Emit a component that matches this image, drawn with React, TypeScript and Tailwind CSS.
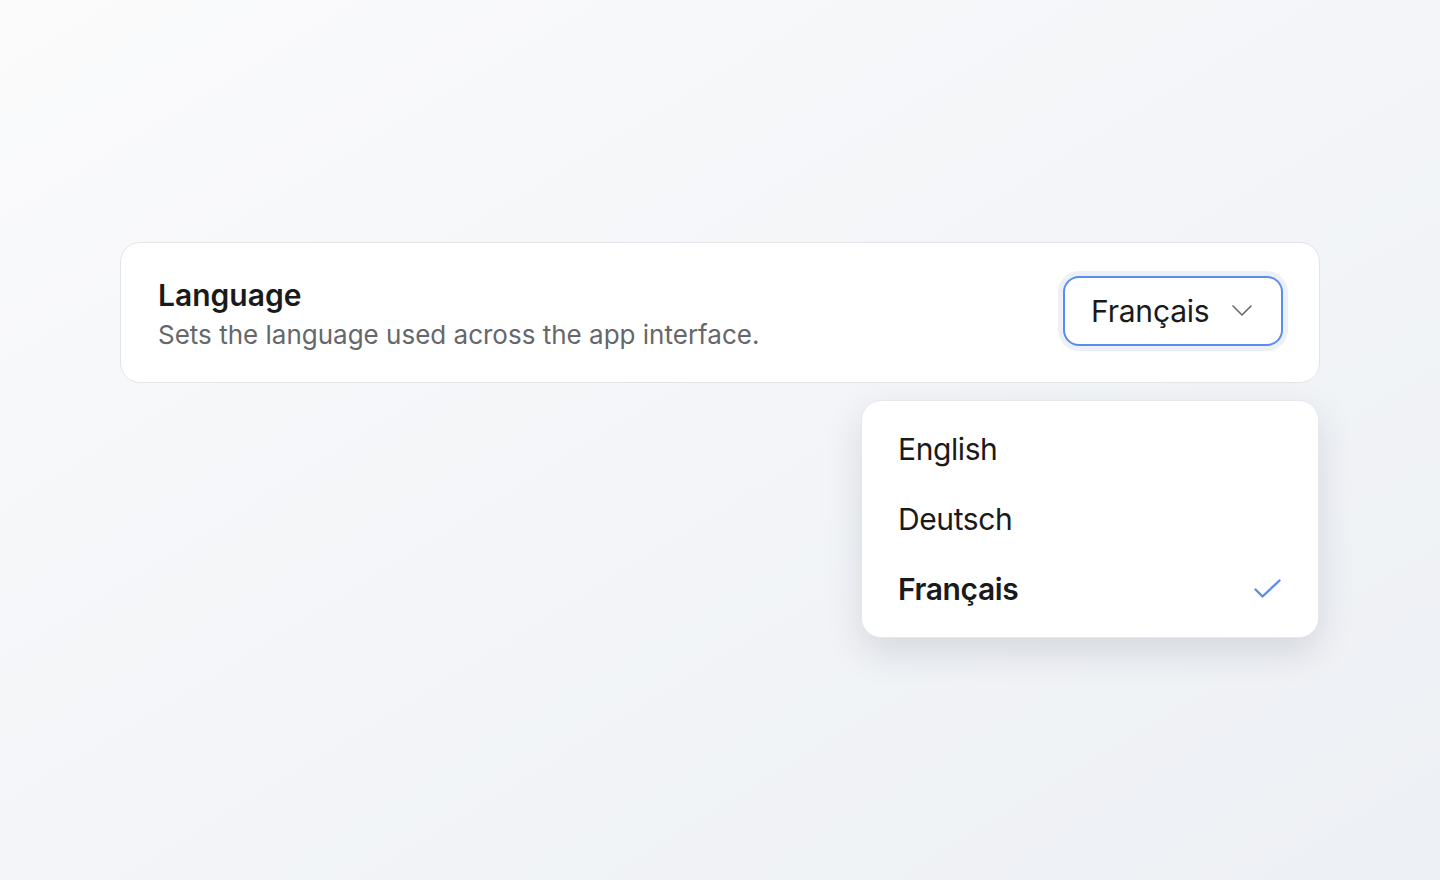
import { useState } from "react";

const idiomas = ["English", "Deutsch", "Français"];

function Chevron() {
  return (
    <svg width="20" height="11" viewBox="0 0 20 11" fill="none" className="shrink-0">
      <path d="M1 1l9 9 9-9" stroke="#666a70" strokeWidth="1.6" strokeLinecap="round" strokeLinejoin="round" />
    </svg>
  );
}

function Check() {
  return (
    <svg width="27" height="20" viewBox="0 0 27 20" fill="none" className="shrink-0">
      <path d="M1.5 10.5l7 7L25.5 1.5" stroke="#5b8def" strokeWidth="2.4" strokeLinecap="round" strokeLinejoin="round" />
    </svg>
  );
}

export default function App() {
  const [valor, setValor] = useState("Français");

  return (
    <div
      className="min-h-screen w-full bg-gradient-to-br from-[#fbfbfc] via-[#f3f5f8] to-[#edf0f4] pt-[242px]"
      style={{ fontFamily: "Inter, 'Noto Sans', sans-serif" }}
    >
      <div className="relative mx-auto w-[1200px]">
        <div className="flex h-[141px] items-center justify-between rounded-[20px] border border-[#e2e4e8] bg-white pl-[37px] pr-9">
          <div className="pt-[6px]">
            <h2 className="text-[30px] font-semibold leading-[36px] text-[#1a1a1a]">Language</h2>
            <p className="mt-[3px] text-[26px] leading-[38px] text-[#66676b]">
              Sets the language used across the app interface.
            </p>
          </div>
          <button
            type="button"
            className="-mt-[4px] flex h-[70px] w-[220px] items-center justify-between rounded-[16px] border-2 border-[#5b8def] bg-white pl-[26px] pr-[29px] shadow-[0_0_0_5px_#edf1f7]"
          >
            <span className="text-[30px] font-normal leading-none tracking-[-0.2px] text-[#1a1a1a]">{valor}</span>
            <Chevron />
          </button>
        </div>

        <div className="absolute right-[1px] top-[158px] w-[458px] rounded-[20px] border border-[#e6e8eb] bg-white pb-[13px] pt-[13px] shadow-[0_14px_36px_rgba(30,41,59,0.13)]">
          {idiomas.map((id) => {
            const activo = id === valor;
            return (
              <div
                key={id}
                onClick={() => setValor(id)}
                className="flex h-[70px] cursor-pointer items-center justify-between pl-9 pr-[37px]"
              >
                <span
                  className={`text-[30px] leading-[36px] tracking-[-0.4px] text-[#1a1a1a] ${activo ? "font-semibold" : "font-normal"}`}
                >
                  {id}
                </span>
                {activo && <Check />}
              </div>
            );
          })}
        </div>
      </div>
    </div>
  );
}
